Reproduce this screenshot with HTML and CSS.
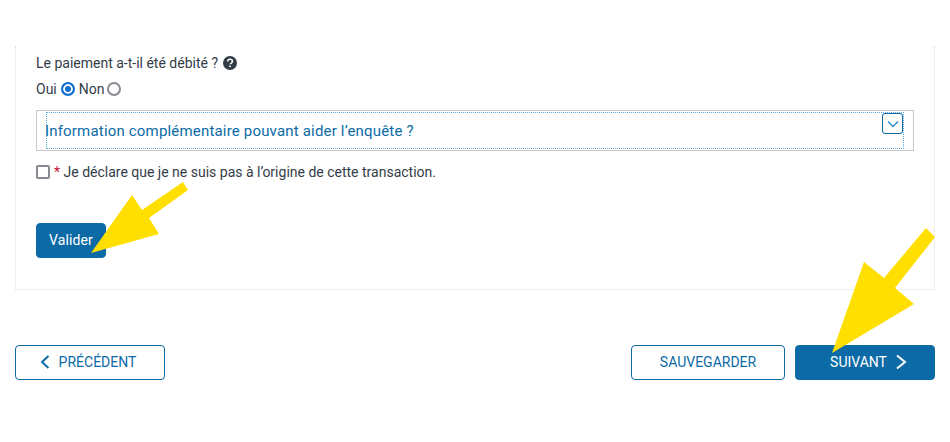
FILE: index.html
```html
<!DOCTYPE html>
<html lang="fr">
  <head>
    <meta charset="UTF-8" />
    <meta name="viewport" content="width=device-width, initial-scale=1.0" />
    <title>Paiement</title>
    <link rel="stylesheet" href="styles.css">
  </head>
  <body>
    <!-- Form panel -->
    <main class="panel">
      <p class="question">
        Le paiement a-t-il été débité ?
        <svg class="help" viewBox="0 0 14 14" width="14" height="14" aria-hidden="true">
          <circle cx="7" cy="7" r="7" fill="#333c47" />
          <path d="M4.7 5.4c0-1.4 1-2.2 2.4-2.2s2.3.8 2.3 2c0 1-.6 1.5-1.2 1.9-.5.3-.8.6-.8 1.2" fill="none" stroke="#fff" stroke-width="1.5" />
          <rect x="6.2" y="9.5" width="1.6" height="1.6" fill="#fff" />
        </svg>
      </p>
      <div class="radios">
        <label class="radio-label">Oui <span class="radio radio-on"></span></label>
        <label class="radio-label">Non <span class="radio"></span></label>
      </div>

      <div class="accordion">
        <div class="accordion-head">
          <span class="accordion-title">Information complémentaire pouvant aider l’enquête ?</span>
          <button class="chevron-btn" type="button" aria-label="Ouvrir">
            <svg viewBox="0 0 12 8" width="12" height="8" aria-hidden="true">
              <path d="M1 1.5l5 5 5-5" fill="none" stroke="#2f8fcf" stroke-width="1.5" />
            </svg>
          </button>
        </div>
      </div>

      <label class="declare">
        <span class="checkbox"></span>
        <span><span class="required">*</span> Je déclare que je ne suis pas à l’origine de cette transaction.</span>
      </label>

      <button class="btn btn-primary btn-validate" type="button">Valider</button>
    </main>

    <!-- Navigation -->
    <nav class="actions">
      <button class="btn btn-outline btn-prev" type="button">
        <svg viewBox="0 0 10 14" width="10" height="14" aria-hidden="true">
          <path d="M8.5 1L2 7l6.5 6" fill="none" stroke="currentColor" stroke-width="2" />
        </svg>
        PRÉCÉDENT
      </button>
      <div class="actions-right">
        <button class="btn btn-outline btn-save" type="button">SAUVEGARDER</button>
        <button class="btn btn-primary btn-next" type="button">
          SUIVANT
          <svg viewBox="0 0 12 16" width="12" height="16" aria-hidden="true">
            <path d="M2 1.5L10 8l-8 6.5" fill="none" stroke="currentColor" stroke-width="2" />
          </svg>
        </button>
      </div>
    </nav>

    <!-- Yellow arrows drawn over the page -->
    <svg class="arrows" viewBox="0 0 950 442" width="950" height="442" aria-hidden="true">
      <polygon points="91,253 132,195 142,210 183,182 188,190 149,218 159,234" fill="#ffdf00" />
      <polygon points="832,353 864,262 884,278 926,228 935,237 895,288 914,304" fill="#ffdf00" />
    </svg>
  </body>
</html>
```

FILE: styles.css
```css
html,
body {
  height: 100%;
}
body {
  position: relative;
  box-sizing: border-box;
  width: 950px;
  height: 442px;
  margin: 0;
  padding: 46px 15px 0;
  overflow: hidden;
  background-color: white;
  color: #333c47;
  font-family: Roboto, "Liberation Sans", sans-serif;
  font-size: 14px;
}
.panel {
  box-sizing: border-box;
  height: 244px;
  padding: 8px 20px 0;
  border: 1px dotted #dcdcdc;
  border-top: none;
}
.question {
  display: flex;
  align-items: center;
  gap: 5px;
  height: 17px;
  margin: 0 0 9px;
}
.help {
  display: block;
}
.radios {
  display: flex;
  gap: 4px;
  height: 17px;
  align-items: center;
}
.radio-label {
  display: flex;
  align-items: center;
  gap: 4px;
}
.radio-label + .radio-label {
  gap: 3px;
}
.radio {
  box-sizing: border-box;
  width: 14px;
  height: 14px;
  border: 2px solid #8a8a94;
  border-radius: 50%;
}
.radio-on {
  border-color: #0f6fd0;
  background-color: #0f6fd0;
  box-shadow: inset 0 0 0 2px white;
}
.accordion {
  box-sizing: border-box;
  height: 41px;
  margin-top: 13px;
  padding: 1px 9px;
  border: 1px solid #c8c8c8;
}
.accordion-head {
  display: flex;
  box-sizing: border-box;
  height: 37px;
  align-items: flex-start;
  justify-content: space-between;
  border: 1px dotted #5aa9dc;
}
.accordion-title {
  margin-top: 9px;
  margin-left: -2px;
  color: #0c6aa6;
  font-size: 15px;
  letter-spacing: 0.18px;
}
.chevron-btn {
  display: flex;
  align-items: center;
  justify-content: center;
  box-sizing: border-box;
  width: 21px;
  height: 21px;
  padding: 0;
  border: 1px solid #0c6aa6;
  border-radius: 3px;
  background-color: white;
}
.declare {
  display: flex;
  align-items: center;
  gap: 4px;
  height: 17px;
  margin-top: 12px;
}
.checkbox {
  box-sizing: border-box;
  width: 14px;
  height: 14px;
  border: 2px solid #8a8a94;
  border-radius: 2px;
}
.required {
  color: #c8102e;
}
.btn {
  display: inline-flex;
  align-items: center;
  justify-content: center;
  box-sizing: border-box;
  height: 35px;
  padding: 0 0 2px;
  border: 1px solid #0c6aa6;
  border-radius: 4px;
  font-family: Roboto, "Liberation Sans", sans-serif;
  font-size: 14px;
}
.btn-primary {
  background-color: #0c6aa6;
  color: white;
}
.btn-outline {
  background-color: white;
  color: #0c6aa6;
}
.btn-validate {
  display: flex;
  width: 70px;
  margin-top: 43px;
  letter-spacing: 0.1px;
}
.actions {
  display: flex;
  justify-content: space-between;
  margin-top: 55px;
}
.actions-right {
  display: flex;
  gap: 10px;
}
.btn-prev {
  gap: 9px;
  width: 150px;
  padding-right: 4px;
}
.btn-save {
  width: 154px;
}
.btn-next {
  gap: 8px;
  width: 140px;
  padding-left: 7px;
}
.arrows {
  position: absolute;
  top: 0;
  left: 0;
}
```
